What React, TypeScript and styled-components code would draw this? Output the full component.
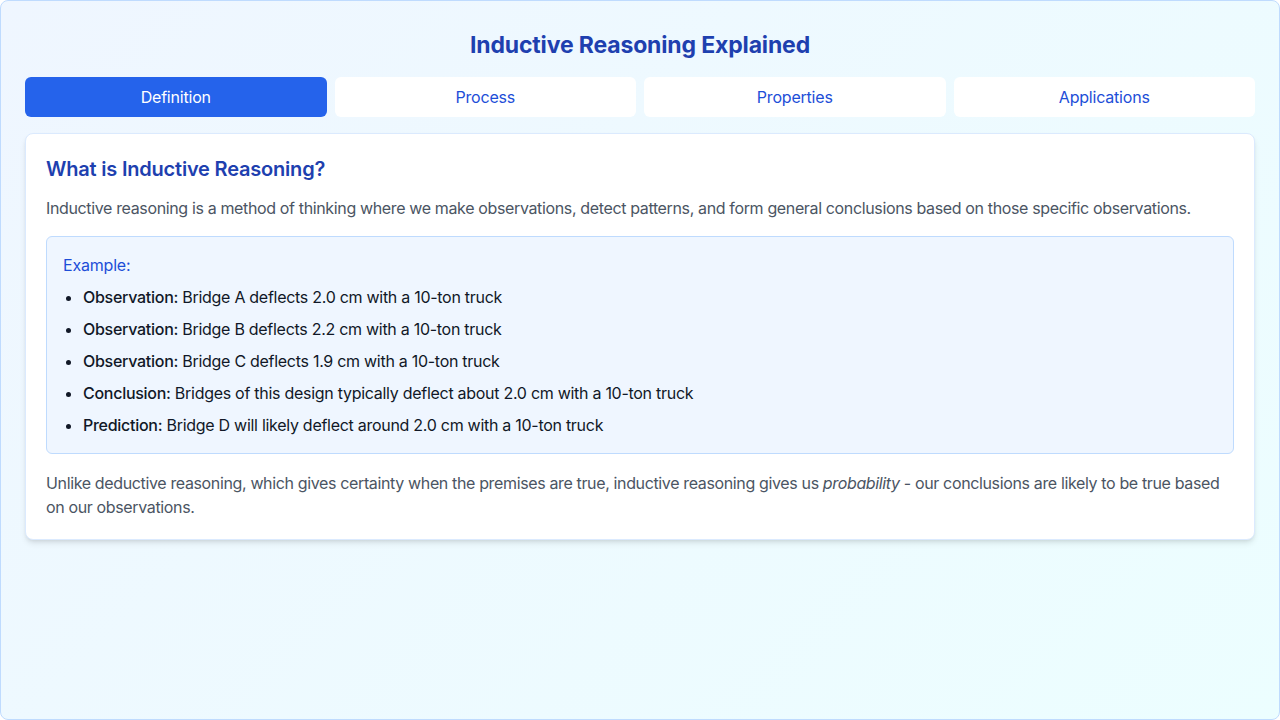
import React, { useState } from "react";
import styled, { createGlobalStyle } from "styled-components";

const Global = createGlobalStyle`
  html, body { margin: 0; padding: 0; }
  body { font-family: Inter, "Noto Sans", sans-serif; -webkit-font-smoothing: antialiased; letter-spacing: -0.2px; }
  * { box-sizing: border-box; }
`;

const Frame = styled.div`
  width: 1280px;
  height: 720px;
  border: 1px solid #bfdbfe;
  border-radius: 8px;
  background: linear-gradient(135deg, #eff6ff 0%, #ecfeff 100%);
  padding: 24px;
  display: flex;
  flex-direction: column;
`;

const Title = styled.h1`
  margin: 4px 0 16px;
  font-size: 23px;
  line-height: 32px;
  font-weight: 700;
  letter-spacing: -0.15px;
  color: #1e40af;
  text-align: center;
`;

const Tabs = styled.div`
  display: grid;
  grid-template-columns: repeat(4, 1fr);
  gap: 8px;
  margin-bottom: 16px;
`;

const Tab = styled.button<{ $active?: boolean }>`
  height: 40px;
  border: none;
  border-radius: 6px;
  font-family: inherit;
  letter-spacing: -0.2px;
  font-size: 16px;
  font-weight: 400;
  cursor: pointer;
  background: ${(p) => (p.$active ? "#2563eb" : "#ffffff")};
  color: ${(p) => (p.$active ? "#ffffff" : "#1d4ed8")};
`;

const Card = styled.section`
  background: #ffffff;
  border: 1px solid #dbeafe;
  border-radius: 8px;
  padding: 20px;
  box-shadow: 0 4px 6px -1px rgba(0, 0, 0, 0.1), 0 2px 4px -2px rgba(0, 0, 0, 0.1);
`;

const Heading = styled.h2`
  margin: 1px 0 13px;
  font-size: 20px;
  line-height: 28px;
  font-weight: 600;
  color: #1e40af;
`;

const Para = styled.p`
  margin: 0;
  font-size: 16px;
  line-height: 24px;
  letter-spacing: -0.36px;
  color: #4b5563;
`;

const ExampleBox = styled.div`
  margin: 16px 0 17px;
  background: #eff6ff;
  border: 1px solid #bfdbfe;
  border-radius: 6px;
  padding: 16px;
`;

const ExampleLabel = styled.div`
  font-size: 16px;
  line-height: 24px;
  font-weight: 400;
  color: #1d4ed8;
`;

const List = styled.ul`
  margin: 0;
  padding-left: 20px;
  list-style: disc;
`;

const Item = styled.li`
  margin-top: 8px;
  font-size: 16px;
  line-height: 24px;
  letter-spacing: -0.28px;
  color: #111827;
`;

const Label = styled.span`
  font-weight: 500;
`;

const items = [
  ["Observation:", "Bridge A deflects 2.0 cm with a 10-ton truck"],
  ["Observation:", "Bridge B deflects 2.2 cm with a 10-ton truck"],
  ["Observation:", "Bridge C deflects 1.9 cm with a 10-ton truck"],
  ["Conclusion:", "Bridges of this design typically deflect about 2.0 cm with a 10-ton truck"],
  ["Prediction:", "Bridge D will likely deflect around 2.0 cm with a 10-ton truck"],
];

const tabs = ["Definition", "Process", "Properties", "Applications"];

export default function App() {
  const [active, setActive] = useState(0);
  return (
    <>
      <Global />
      <Frame>
        <Title>Inductive Reasoning Explained</Title>
        <Tabs>
          {tabs.map((t, i) => (
            <Tab key={t} $active={i === active} onClick={() => setActive(i)}>
              {t}
            </Tab>
          ))}
        </Tabs>
        <Card>
          <Heading>What is Inductive Reasoning?</Heading>
          <Para>
            Inductive reasoning is a method of thinking where we make observations, detect patterns, and form general conclusions based on those specific observations.
          </Para>
          <ExampleBox>
            <ExampleLabel>Example:</ExampleLabel>
            <List>
              {items.map(([l, t], i) => (
                <Item key={i}>
                  <Label>{l}</Label> {t}
                </Item>
              ))}
            </List>
          </ExampleBox>
          <Para>
            Unlike deductive reasoning, which gives certainty when the premises are true, inductive reasoning gives us <em>probability</em> - our conclusions are likely to be true based on our observations.
          </Para>
        </Card>
      </Frame>
    </>
  );
}
